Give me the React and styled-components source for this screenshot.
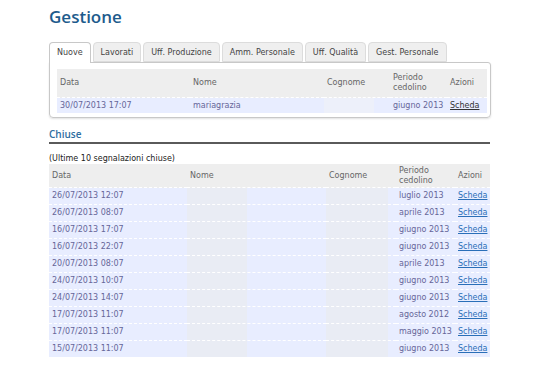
import React from "react";
import styled, { createGlobalStyle } from "styled-components";

const Global = createGlobalStyle`
  body {
    margin: 0;
    background: #fff;
    font-family: "DejaVu Sans", Verdana, sans-serif;
    font-size: 8px;
  }
`;

const Page = styled.div`
  width: 441px;
  padding: 0 0 0 49px;
`;

const Title = styled.h1`
  margin: 0;
  padding-top: 6px;
  height: 36px;
  font-family: "Open Sans", sans-serif;
  font-size: 17px;
  font-weight: 600;
  line-height: 22px;
  color: #1d5b8c;
`;

const Tabs = styled.ul`
  display: flex;
  gap: 2px;
  margin: 0;
  padding: 0;
  list-style: none;
  height: 20px;
`;

const Tab = styled.li`
  box-sizing: border-box;
  height: ${(p) => (p.active ? "21px" : "20px")};
  padding: 0 7px;
  line-height: 19px;
  color: #444;
  background: ${(p) => (p.active ? "#fff" : "#efefef")};
  border: 1px solid ${(p) => (p.active ? "#c8c8c8" : "#dcdcdc")};
  border-bottom: ${(p) => (p.active ? "none" : "1px solid #dcdcdc")};
  border-radius: 4px 4px 0 0;
  position: relative;
  z-index: ${(p) => (p.active ? 1 : 0)};
`;

const Panel = styled.div`
  box-sizing: border-box;
  width: 442px;
  height: 56px;
  padding: 6px 4px 0 7px;
  border: 1px solid #c8c8c8;
  border-radius: 0 3px 4px 4px;
  box-shadow: 0 1px 2px rgba(0, 0, 0, 0.12);
`;

const Table = styled.table`
  width: 100%;
  border-collapse: collapse;
  table-layout: fixed;
`;

const Th = styled.th`
  text-align: left;
  font-weight: normal;
  color: #666;
  background: #eeeeee;
  padding: 0 3px;
  height: ${(p) => p.h}px;
  line-height: 10px;
  vertical-align: middle;
`;

const Td = styled.td`
  color: #669;
  background: #e8edff;
  border-top: 1px dashed #fff;
  padding: 0 3px;
  height: ${(p) => p.h}px;
  line-height: 10px;
  white-space: nowrap;
`;

const MaskTd = styled(Td)`
  background: linear-gradient(
    90deg,
    ${(p) => p.tone} ${(p) => p.w}px,
    #e8edff ${(p) => p.w}px
  );
`;

const Link = styled.a`
  color: ${(p) => (p.dark ? "#333" : "#2a6fb8")};
  text-decoration: underline;
  cursor: pointer;
`;

const Section = styled.h2`
  margin: 9px 0 0;
  padding-bottom: 1px;
  font-family: "Open Sans", sans-serif;
  font-size: 10px;
  font-weight: 600;
  line-height: 14px;
  color: #2e6da0;
  border-bottom: 2px solid #5a5a5a;
`;

const Note = styled.p`
  margin: 0;
  padding-top: 10px;
  height: 10px;
  line-height: 10px;
  color: #222;
`;

const tabs = [
  "Nuove",
  "Lavorati",
  "Uff. Produzione",
  "Amm. Personale",
  "Uff. Qualità",
  "Gest. Personale",
];

const closed = [
  ["26/07/2013 12:07", "luglio 2013"],
  ["26/07/2013 08:07", "aprile 2013"],
  ["16/07/2013 17:07", "giugno 2013"],
  ["16/07/2013 22:07", "giugno 2013"],
  ["20/07/2013 08:07", "aprile 2013"],
  ["24/07/2013 10:07", "giugno 2013"],
  ["24/07/2013 14:07", "giugno 2013"],
  ["17/07/2013 11:07", "agosto 2012"],
  ["17/07/2013 11:07", "maggio 2013"],
  ["15/07/2013 11:07", "giugno 2013"],
];

export default function App() {
  return (
    <Page>
      <Global />
      <Title>Gestione</Title>
      <Tabs>
        {tabs.map((t, i) => (
          <Tab key={t} active={i === 0}>
            {t}
          </Tab>
        ))}
      </Tabs>
      <Panel>
        <Table>
          <colgroup>
            <col style={{ width: 133 }} />
            <col style={{ width: 134 }} />
            <col style={{ width: 66 }} />
            <col style={{ width: 57 }} />
            <col style={{ width: 40 }} />
          </colgroup>
          <thead>
            <tr>
              <Th h={28}>Data</Th>
              <Th h={28}>Nome</Th>
              <Th h={28}>Cognome</Th>
              <Th h={28}>
                Periodo
                <br />
                cedolino
              </Th>
              <Th h={28}>Azioni</Th>
            </tr>
          </thead>
          <tbody>
            <tr>
              <Td h={15}>30/07/2013 17:07</Td>
              <Td h={15}>mariagrazia</Td>
              <MaskTd h={15} w={50} tone="#edf0fa"></MaskTd>
              <Td h={15}>giugno 2013</Td>
              <Td h={15}>
                <Link dark>Scheda</Link>
              </Td>
            </tr>
          </tbody>
        </Table>
      </Panel>

      <Section>Chiuse</Section>
      <Note>(Ultime 10 segnalazioni chiuse)</Note>
      <Table>
        <colgroup>
          <col style={{ width: 138 }} />
          <col style={{ width: 139 }} />
          <col style={{ width: 70 }} />
          <col style={{ width: 59 }} />
          <col style={{ width: 35 }} />
        </colgroup>
        <thead>
          <tr>
            <Th h={23}>Data</Th>
            <Th h={23}>Nome</Th>
            <Th h={23}>Cognome</Th>
            <Th h={23}>
              Periodo
              <br />
              cedolino
            </Th>
            <Th h={23}>Azioni</Th>
          </tr>
        </thead>
        <tbody>
          {closed.map(([date, period], i) => (
            <tr key={i}>
              <Td h={16}>{date}</Td>
              <MaskTd h={16} w={60} tone="#e9ecf4"></MaskTd>
              <MaskTd h={16} w={62} tone="#e9ecf4"></MaskTd>
              <Td h={16}>{period}</Td>
              <Td h={16}>
                <Link>Scheda</Link>
              </Td>
            </tr>
          ))}
        </tbody>
      </Table>
    </Page>
  );
}
